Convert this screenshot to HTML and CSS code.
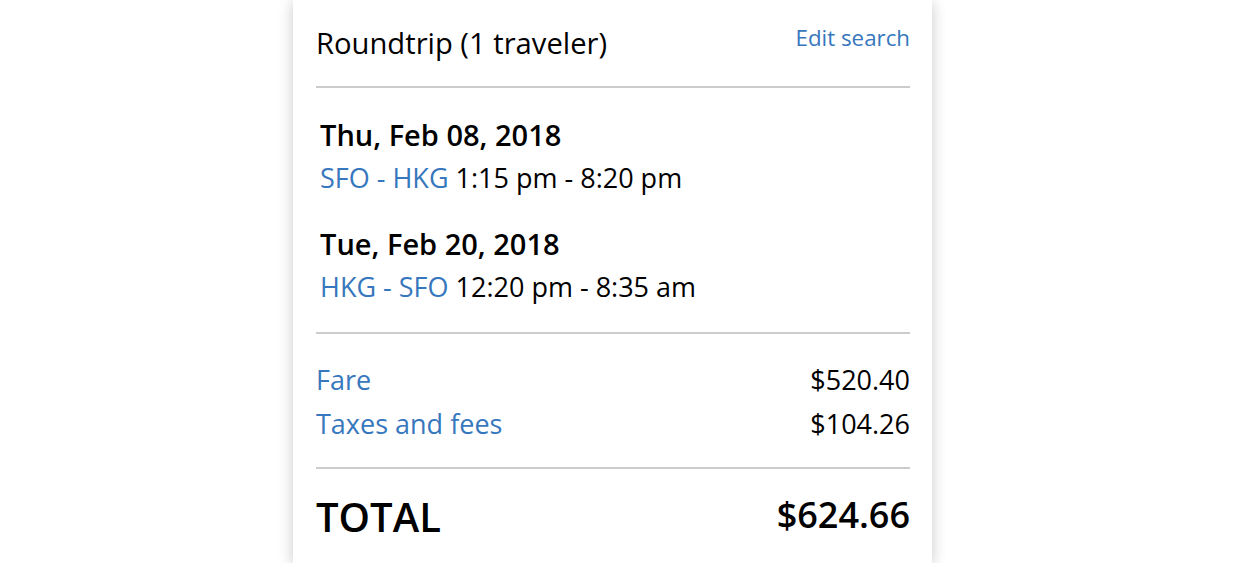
FILE: index.html
```html
<!DOCTYPE html>
<html>
<head>
<meta charset="utf-8">
<link rel="stylesheet" href="styles.css">
</head>
<body>
<div class="page">
  <div class="card">
    <div class="header">
      <div class="title">Roundtrip (1 traveler)</div>
      <a class="edit" href="#">Edit search</a>
    </div>
    <div class="trips">
      <div class="trip">
        <div class="date">Thu, Feb 08, 2018</div>
        <div class="flight"><span class="route">SFO - HKG</span> 1:15 pm - 8:20 pm</div>
      </div>
      <div class="trip">
        <div class="date">Tue, Feb 20, 2018</div>
        <div class="flight"><span class="route">HKG - SFO</span> 12:20 pm - 8:35 am</div>
      </div>
    </div>
    <div class="costs">
      <div class="row"><span class="label">Fare</span><span class="amount">$520.40</span></div>
      <div class="row"><span class="label">Taxes and fees</span><span class="amount">$104.26</span></div>
    </div>
    <div class="total">
      <span class="total-label">TOTAL</span><span class="total-amount">$624.66</span>
    </div>
  </div>
</div>
</body>
</html>
```
FILE: styles.css
```css
html, body {
  margin: 0;
  padding: 0;
  background: #fff;
}
body {
  font-family: "Open Sans", "Noto Sans", sans-serif;
  color: #000;
}
.page {
  padding-left: 293px;
}
.card {
  width: 594px;
  padding: 0 22px 0 23px;
  background: #fff;
  box-shadow: 0 2px 14px rgba(0, 0, 0, 0.22);
}
.header {
  display: flex;
  justify-content: space-between;
  align-items: flex-start;
  padding: 24px 0 24px;
  border-bottom: 2px solid #cccccc;
}
.title {
  font-size: 29.2px;
  line-height: 38px;
}
.edit {
  font-size: 22.3px;
  line-height: 28px;
  color: #3777bd;
  text-decoration: none;
}
.trips {
  padding: 29px 4px 27px;
  border-bottom: 2px solid #cccccc;
}
.trip + .trip {
  margin-top: 30px;
}
.date {
  font-size: 29px;
  font-weight: 600;
  line-height: 36px;
}
.flight {
  font-size: 27px;
  line-height: 36px;
  margin-top: 7px;
}
.route {
  color: #3777bd;
}
.costs {
  padding: 24px 0 21px;
  border-bottom: 2px solid #cccccc;
}
.row {
  display: flex;
  justify-content: space-between;
  font-size: 27px;
  line-height: 44px;
}
.label {
  color: #3777bd;
}
.total {
  display: flex;
  justify-content: space-between;
  align-items: flex-start;
  font-weight: 600;
  padding: 21px 0 19px;
}
.total-label {
  font-size: 40px;
  line-height: 54px;
}
.total-amount {
  font-size: 36px;
  line-height: 50px;
}
```
